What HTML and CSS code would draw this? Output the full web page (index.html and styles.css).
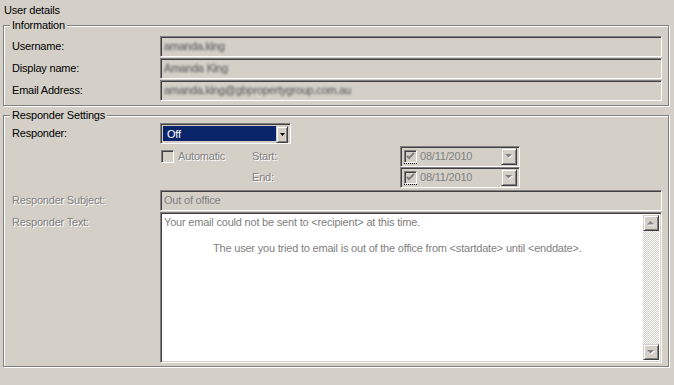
FILE: index.html
```html
<!DOCTYPE html>
<html lang="en">
<head>
    <meta charset="UTF-8">
    <title>User details</title>
    <link rel="stylesheet" href="styles.css">
</head>
<body>
    <div class="title">User details</div>

    <fieldset class="group info">
        <legend>Information</legend>
        <div class="row">
            <span class="label">Username:</span>
            <div class="field"><span class="blur">amanda.king</span></div>
        </div>
        <div class="row">
            <span class="label">Display name:</span>
            <div class="field"><span class="blur">Amanda King</span></div>
        </div>
        <div class="row">
            <span class="label">Email Address:</span>
            <div class="field"><span class="blur">amanda.king@gbpropertygroup.com.au</span></div>
        </div>
    </fieldset>

    <fieldset class="group responder">
        <legend>Responder Settings</legend>
        <div class="row">
            <span class="label">Responder:</span>
            <div class="combo">
                <span class="combo-value">Off</span>
                <span class="btn combo-btn">
                    <svg width="5" height="3" viewBox="0 0 5 3"><polygon points="0,0 5,0 2.5,3" fill="#000"/></svg>
                </span>
            </div>
        </div>

        <div class="sched">
            <div class="sched-line">
                <span class="label"></span>
                <div class="check">
                    <span class="box"></span>
                    <span class="disabled">Automatic</span>
                </div>
                <span class="disabled sched-label">Start:</span>
                <div class="date">
                    <span class="focus"><span class="box small">
                        <svg width="9" height="9" viewBox="0 0 9 9"><polyline points="1,4 3,6 8,1" fill="none" stroke="#808080" stroke-width="2"/></svg>
                    </span></span>
                    <span class="date-text">08/11/2010</span>
                    <span class="btn date-btn">
                        <svg width="8" height="5" viewBox="0 0 8 5"><polygon points="1,1 8,1 4.5,4.5" fill="#fff"/><polygon points="0,0 7,0 3.5,3.5" fill="#808080"/></svg>
                    </span>
                </div>
            </div>
            <div class="sched-line">
                <span class="label"></span>
                <div class="check"></div>
                <span class="disabled sched-label">End:</span>
                <div class="date">
                    <span class="focus"><span class="box small">
                        <svg width="9" height="9" viewBox="0 0 9 9"><polyline points="1,4 3,6 8,1" fill="none" stroke="#808080" stroke-width="2"/></svg>
                    </span></span>
                    <span class="date-text">08/11/2010</span>
                    <span class="btn date-btn">
                        <svg width="8" height="5" viewBox="0 0 8 5"><polygon points="1,1 8,1 4.5,4.5" fill="#fff"/><polygon points="0,0 7,0 3.5,3.5" fill="#808080"/></svg>
                    </span>
                </div>
            </div>
        </div>

        <div class="row subject">
            <span class="label disabled">Responder Subject:</span>
            <div class="field"><span class="grey">Out of office</span></div>
        </div>

        <div class="row text-row">
            <span class="label disabled">Responder Text:</span>
            <div class="textarea">
                <div class="ta-text">
                    <div>Your email could not be sent to &lt;recipient&gt; at this time.</div>
                    <div>&nbsp;</div>
                    <div class="indent">The user you tried to email is out of the office from &lt;startdate&gt; until &lt;enddate&gt;.</div>
                </div>
                <div class="scroll">
                    <span class="btn sbtn">
                        <svg width="8" height="5" viewBox="0 0 8 5"><polygon points="1,4.5 8,4.5 4.5,1" fill="#fff"/><polygon points="0,3.5 7,3.5 3.5,0" fill="#808080"/></svg>
                    </span>
                    <span class="btn sbtn">
                        <svg width="8" height="5" viewBox="0 0 8 5"><polygon points="1,1 8,1 4.5,4.5" fill="#fff"/><polygon points="0,0 7,0 3.5,3.5" fill="#808080"/></svg>
                    </span>
                </div>
            </div>
        </div>
    </fieldset>
</body>
</html>
```

FILE: styles.css
```css
body {
    margin: 0;
    width: 674px;
    height: 385px;
    overflow: hidden;
    background: #d4d0c8;
    color: #000;
    font-family: "Liberation Sans", Arial, sans-serif;
    font-size: 11px;
    line-height: 13px;
    letter-spacing: -0.2px;
}

.title {
    padding: 4px 0 0 4px;
    height: 13px;
}

/* etched group box */
.group {
    margin: 2px 5px 0 3px;
    padding: 4px 6px 4px 8px;
    border: 1px solid #808080;
    box-shadow: 1px 1px 0 #fff, inset 1px 1px 0 #fff;
    min-width: 0;
}

.group legend {
    margin-left: -2px;
    padding: 0 2px;
    background: #d4d0c8;
    line-height: 13px;
}

.responder {
    margin-top: 3px;
    padding-top: 1px;
    padding-bottom: 3px;
}

.row {
    display: flex;
    align-items: center;
    height: 21px;
}

.row + .row {
    margin-top: 1px;
}

.label {
    width: 148px;
    flex: none;
}

.disabled {
    color: #808080;
    text-shadow: 1px 1px 0 #fff;
}

.grey {
    color: #808080;
}

/* sunken 3d edge */
.field,
.combo,
.date,
.textarea,
.box {
    box-sizing: border-box;
    border: 1px solid;
    border-color: #808080 #fff #fff #808080;
    box-shadow: inset 1px 1px 0 #404040, inset -1px -1px 0 #d4d0c8;
}

.field {
    flex: 1;
    height: 21px;
    padding: 0 3px;
    display: flex;
    align-items: center;
}

.blur {
    color: #666;
    filter: blur(1.2px);
    -webkit-text-stroke: 0.3px #777;
}

/* raised button */
.btn {
    box-sizing: border-box;
    display: flex;
    align-items: center;
    justify-content: center;
    background: #d4d0c8;
    border: 1px solid;
    border-color: #d4d0c8 #404040 #404040 #d4d0c8;
    box-shadow: inset 1px 1px 0 #fff, inset -1px -1px 0 #808080;
}

.combo {
    width: 131px;
    height: 21px;
    padding: 2px;
    display: flex;
}

.combo-value {
    flex: 1;
    background: #0a246a;
    color: #fff;
    padding-left: 4px;
    line-height: 17px;
}

.combo-btn {
    width: 12px;
    height: 17px;
}

.sched {
    margin-top: 2px;
}

.sched-line {
    display: flex;
    align-items: center;
    height: 21px;
}

.check {
    width: 92px;
    display: flex;
    align-items: center;
    gap: 4px;
}

.box {
    width: 13px;
    height: 13px;
    margin-left: 1px;
    display: flex;
    align-items: center;
    justify-content: center;
}

.sched-label {
    width: 148px;
}

.date {
    width: 120px;
    height: 21px;
    padding: 2px;
    display: flex;
    align-items: center;
}

.focus {
    border-bottom: 1px dotted #000;
    margin-left: 1px;
    margin-top: 1px;
}

.box.small {
    margin: 0;
}

.date-text {
    flex: 1;
    padding-left: 3px;
    color: #808080;
}

.date-btn {
    width: 16px;
    height: 17px;
}

.subject {
    margin-top: 2px;
}

.text-row {
    height: 151px;
    align-items: flex-start;
}

.text-row .label {
    padding-top: 4px;
}

.textarea {
    flex: 1;
    height: 151px;
    padding: 2px;
    display: flex;
    background: #fff;
}

.ta-text {
    flex: 1;
    padding: 1px 0 0 1px;
    color: #808080;
    white-space: nowrap;
}

.indent {
    padding-left: 49px;
}

.scroll {
    width: 16px;
    display: flex;
    flex-direction: column;
    justify-content: space-between;
    background-color: #fff;
    background-image: conic-gradient(#d4d0c8 25%, #fff 0 50%, #d4d0c8 0 75%, #fff 0);
    background-size: 2px 2px;
}

.sbtn {
    height: 16px;
}
```
